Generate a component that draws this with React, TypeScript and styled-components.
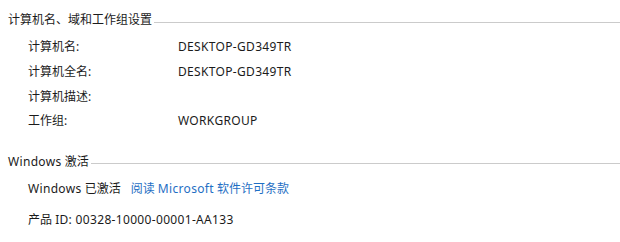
import styled, { createGlobalStyle } from 'styled-components';

const GlobalStyle = createGlobalStyle`
  html, body {
    margin: 0;
    padding: 0;
    background: #ffffff;
  }
  body {
    font-family: 'Noto Sans', 'Noto Sans CJK SC', sans-serif;
    font-size: 12px;
    color: #1b1b1b;
  }
`;

type InfoRow = {
  label: string;
  value?: string;
};

const computerRows: InfoRow[] = [
  { label: '计算机名:', value: 'DESKTOP-GD349TR' },
  { label: '计算机全名:', value: 'DESKTOP-GD349TR' },
  { label: '计算机描述:' },
  { label: '工作组:', value: 'WORKGROUP' },
];

const App = () => {
  return (
    <>
      <GlobalStyle />
      <Page>
        <Section>
          <Header>
            <HeaderText>计算机名、域和工作组设置</HeaderText>
            <HeaderLine />
          </Header>
          <Rows>
            {computerRows.map((row) => (
              <Row key={row.label}>
                <Label>{row.label}</Label>
                <Value>{row.value ?? ''}</Value>
              </Row>
            ))}
          </Rows>
        </Section>

        <Section $top={20}>
          <Header>
            <HeaderText>
              <Latin>Windows</Latin> 激活
            </HeaderText>
            <HeaderLine />
          </Header>
          <ActivationRow>
            <span>
              <Latin>Windows</Latin> 已激活
            </span>
            <Link href="#">
              阅读 <Latin>Microsoft</Latin> 软件许可条款
            </Link>
          </ActivationRow>
          <ProductId>
            产品 <Latin>ID: 00328-10000-00001-AA133</Latin>
          </ProductId>
        </Section>
      </Page>
    </>
  );
};

export default App;

const Page = styled.div`
  width: 620px;
  height: 242px;
  box-sizing: border-box;
  padding: 12px 0 0 8px;
  display: flex;
  flex-direction: column;
  overflow: hidden;
`;

const Section = styled.section<{ $top?: number }>`
  display: flex;
  flex-direction: column;
  margin-top: ${(p) => p.$top ?? 0}px;
`;

// latin runs are a touch wider in the original UI font
const Latin = styled.span`
  letter-spacing: 0.33px;
`;

const Header = styled.div`
  display: flex;
  align-items: center;
  height: 16px;
  line-height: 16px;
`;

const HeaderText = styled.span`
  white-space: nowrap;
  padding-right: 2px;
`;

const HeaderLine = styled.div`
  flex: 1;
  height: 1px;
  margin-top: 4px;
  background: #cbcbcb;
`;

const Rows = styled.div`
  display: flex;
  flex-direction: column;
  margin-top: 7px;
  padding-left: 20px;
`;

const Row = styled.div`
  display: grid;
  grid-template-columns: 150px 1fr;
  align-items: center;
  height: 24.67px;
  line-height: 16px;
`;

const Label = styled.span`
  white-space: nowrap;
`;

const Value = styled.span`
  white-space: nowrap;
  letter-spacing: 0.33px;
`;

const ActivationRow = styled.div`
  display: flex;
  align-items: center;
  gap: 10px;
  height: 24px;
  margin-top: 7px;
  padding-left: 20px;
  line-height: 16px;
`;

const Link = styled.a`
  color: #1f6fc4;
  text-decoration: none;
`;

const ProductId = styled.div`
  height: 24px;
  line-height: 24px;
  margin-top: 7px;
  padding-left: 20px;
`;
